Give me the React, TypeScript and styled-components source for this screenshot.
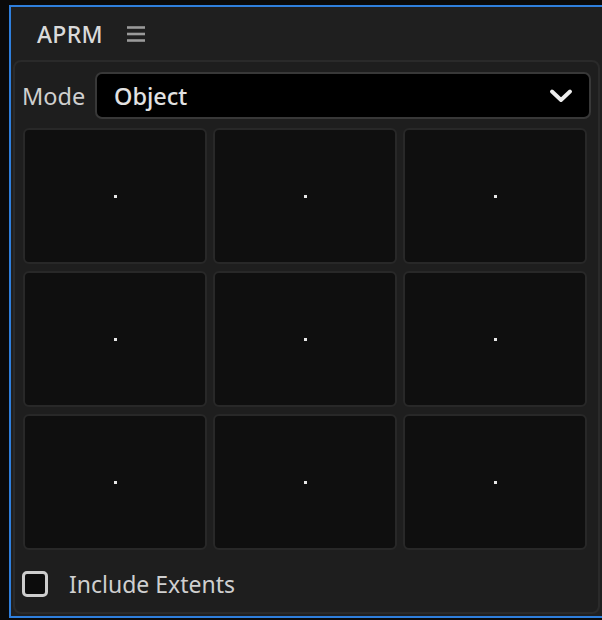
import styled, { createGlobalStyle } from "styled-components";

const GlobalStyle = createGlobalStyle`
  html, body {
    margin: 0;
    padding: 0;
    background: #0a0a0a;
    overflow: hidden;
  }
  body {
    font-family: "Noto Sans", "Open Sans", sans-serif;
  }
`;

const Window = styled.div`
  margin: 5px 0 0 9px;
  width: 600px;
  height: 613px;
  box-sizing: border-box;
  border: 2px solid #2f7fdc;
  background: #1f1f1f;
  display: flex;
  flex-direction: column;
  padding: 0 0 2px 2px;
`;

const Header = styled.div`
  height: 53px;
  display: flex;
  align-items: center;
  padding-left: 24px;
  gap: 23px;
`;

const Title = styled.span`
  color: #dadada;
  font-size: 23px;
  font-weight: 500;
  letter-spacing: 0.3px;
`;

const Panel = styled.div`
  flex: 1;
  width: 587px;
  box-sizing: border-box;
  border: 2px solid #2a2a2a;
  border-radius: 8px;
  background: #1e1e1e;
  padding: 10px 7px 0 8px;
  display: flex;
  flex-direction: column;
`;

const ModeRow = styled.div`
  display: flex;
  align-items: center;
  gap: 8px;
`;

const Label = styled.span`
  color: #cfcfcf;
  font-size: 23.5px;
  width: 64px;
  margin-left: -1px;
  margin-right: 1px;
`;

const Select = styled.div`
  flex: 1;
  height: 47px;
  box-sizing: border-box;
  background: #000;
  border: 2px solid #383838;
  border-radius: 7px;
  display: flex;
  align-items: center;
  justify-content: space-between;
  padding: 0 16px 0 17px;
  color: #e2e2e2;
  font-size: 23.5px;
  font-weight: 500;
`;

const Grid = styled.div`
  margin-top: 9px;
  width: 564px;
  display: grid;
  grid-template-columns: repeat(3, 1fr);
  grid-auto-rows: 136px;
  column-gap: 6px;
  row-gap: 7px;
`;

const Cell = styled.div`
  box-sizing: border-box;
  background: #0f0f0f;
  border: 2px solid #282828;
  border-radius: 6px;
  display: flex;
  align-items: center;
  justify-content: center;
`;

const Dot = styled.span`
  width: 3px;
  height: 3px;
  background: #e6e6e6;
`;

const CheckRow = styled.label`
  margin-top: 18px;
  display: flex;
  align-items: center;
  gap: 21px;
  color: #cfcfcf;
  font-size: 23px;
`;

const Box = styled.span`
  width: 26px;
  height: 26px;
  box-sizing: border-box;
  border: 3px solid #cdcdcd;
  border-radius: 5px;
  background: #0c0c0c;
  margin-left: -1px;
`;

const Burger = () => (
  <svg width="20" height="18" viewBox="0 0 20 18">
    <g stroke="#9a9a9a" strokeWidth="2.6">
      <line x1="1" y1="2.5" x2="19" y2="2.5" />
      <line x1="1" y1="9" x2="19" y2="9" />
      <line x1="1" y1="15.5" x2="19" y2="15.5" />
    </g>
  </svg>
);

const Chevron = () => (
  <svg width="24" height="14" viewBox="0 0 24 14">
    <path
      d="M3 2.5 L12 11 L21 2.5"
      fill="none"
      stroke="#eeeeee"
      strokeWidth="3.8"
      strokeLinecap="round"
      strokeLinejoin="round"
    />
  </svg>
);

export default function App() {
  return (
    <>
      <GlobalStyle />
      <Window>
        <Header>
          <Title>APRM</Title>
          <Burger />
        </Header>
        <Panel>
          <ModeRow>
            <Label>Mode</Label>
            <Select>
              <span>Object</span>
              <Chevron />
            </Select>
          </ModeRow>
          <Grid>
            {Array.from({ length: 9 }).map((_, i) => (
              <Cell key={i}>
                <Dot />
              </Cell>
            ))}
          </Grid>
          <CheckRow>
            <Box />
            Include Extents
          </CheckRow>
        </Panel>
      </Window>
    </>
  );
}
